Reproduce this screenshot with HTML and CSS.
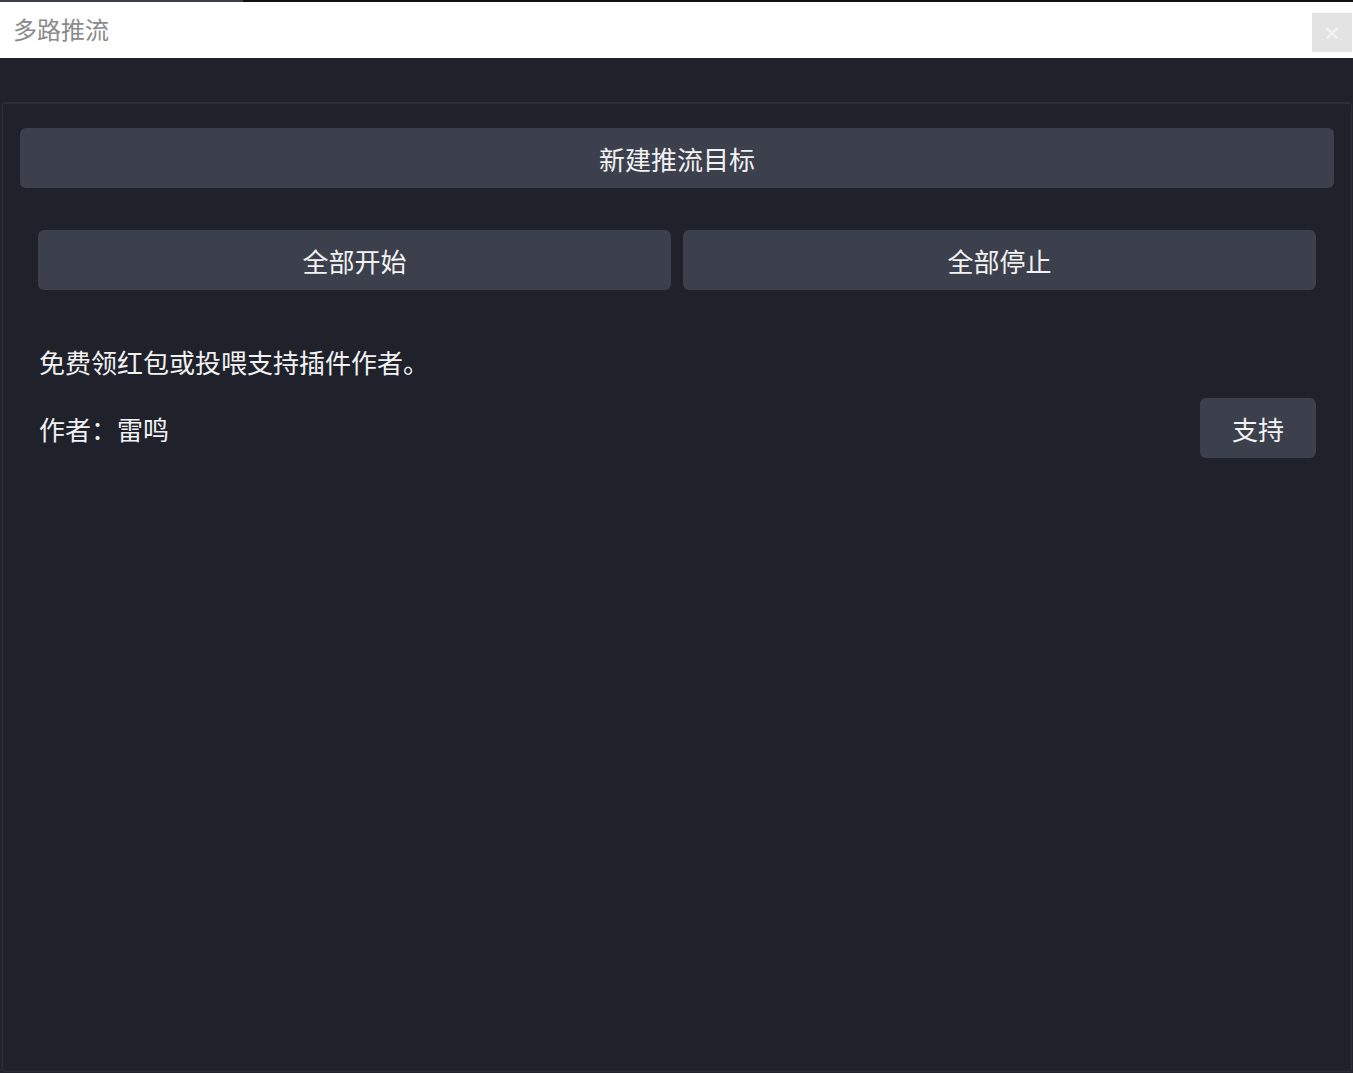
FILE: index.html
```html
<!DOCTYPE html>
<html lang="zh-CN">

<head>
    <meta charset="UTF-8">
    <meta name="viewport" content="width=device-width, initial-scale=1.0">
    <title>多路推流</title>
    <link rel="stylesheet" href="styles.css">
</head>

<body>
    <div class="topline"><div class="topline-tab"></div></div>
    <div class="titlebar">
        <span class="title">多路推流</span>
        <button class="close" type="button">&times;</button>
    </div>

    <div class="main">
        <div class="panel">
            <button class="btn btn-wide" type="button">新建推流目标</button>

            <div class="row">
                <button class="btn" type="button">全部开始</button>
                <button class="btn" type="button">全部停止</button>
            </div>

            <div class="info">
                <p class="note">免费领红包或投喂支持插件作者。</p>
                <div class="author">
                    <span>作者：雷鸣</span>
                    <button class="btn btn-small" type="button">支持</button>
                </div>
            </div>
        </div>
    </div>
</body>

</html>
```

FILE: styles.css
```css
html, body {
    margin: 0;
    height: 100%;
}

body {
    font-family: "Noto Sans CJK SC", "Noto Sans", sans-serif;
    background-color: rgb(31, 33, 43);
    display: flex;
    flex-direction: column;
    overflow: hidden;
}

.topline {
    height: 2px;
    background-color: #111;
    flex-shrink: 0;
}
.topline-tab {
    width: 243px;
    height: 100%;
    background-color: rgb(58, 61, 74);
}

.titlebar {
    height: 56px;
    background-color: #fff;
    display: flex;
    align-items: center;
    justify-content: space-between;
    flex-shrink: 0;
}
.title {
    margin-left: 13px;
    margin-top: -2px;
    font-size: 24px;
    color: #8a8a8a;
    line-height: 1;
}
.close {
    align-self: flex-start;
    width: 40px;
    height: 39px;
    margin: 11px 1px 0 0;
    border: none;
    background-color: #e3e3e3;
    color: #f4f4f4;
    font-size: 22px;
    line-height: 1;
    padding: 0;
    font-family: "DejaVu Sans", sans-serif;
}

.main {
    flex: 1;
    display: flex;
    padding: 44px 1px 1px 2px;
}

.panel {
    flex: 1;
    border: 1px solid rgb(44, 46, 60);
    border-top: 2px solid rgb(44, 46, 60);
    border-radius: 4px;
    padding: 24px 17px;
}

.btn {
    height: 60px;
    border: none;
    border-radius: 6px;
    background-color: rgb(60, 64, 76);
    color: #f2f2f2;
    font-family: inherit;
    font-size: 26px;
    padding: 0;
    cursor: pointer;
}

.btn-wide {
    width: 100%;
    display: block;
}

.row {
    display: grid;
    grid-template-columns: 1fr 1fr;
    gap: 12px;
    margin: 42px 18px 0 18px;
}

.info {
    margin: 0 18px;
    color: #f2f2f2;
    font-size: 26px;
}

.note {
    margin: 59px 0 0 1px;
    line-height: 1;
}

.author {
    display: flex;
    align-items: center;
    justify-content: space-between;
    margin-top: 23px;
    padding-left: 1px;
}

.btn-small {
    width: 116px;
}
```
